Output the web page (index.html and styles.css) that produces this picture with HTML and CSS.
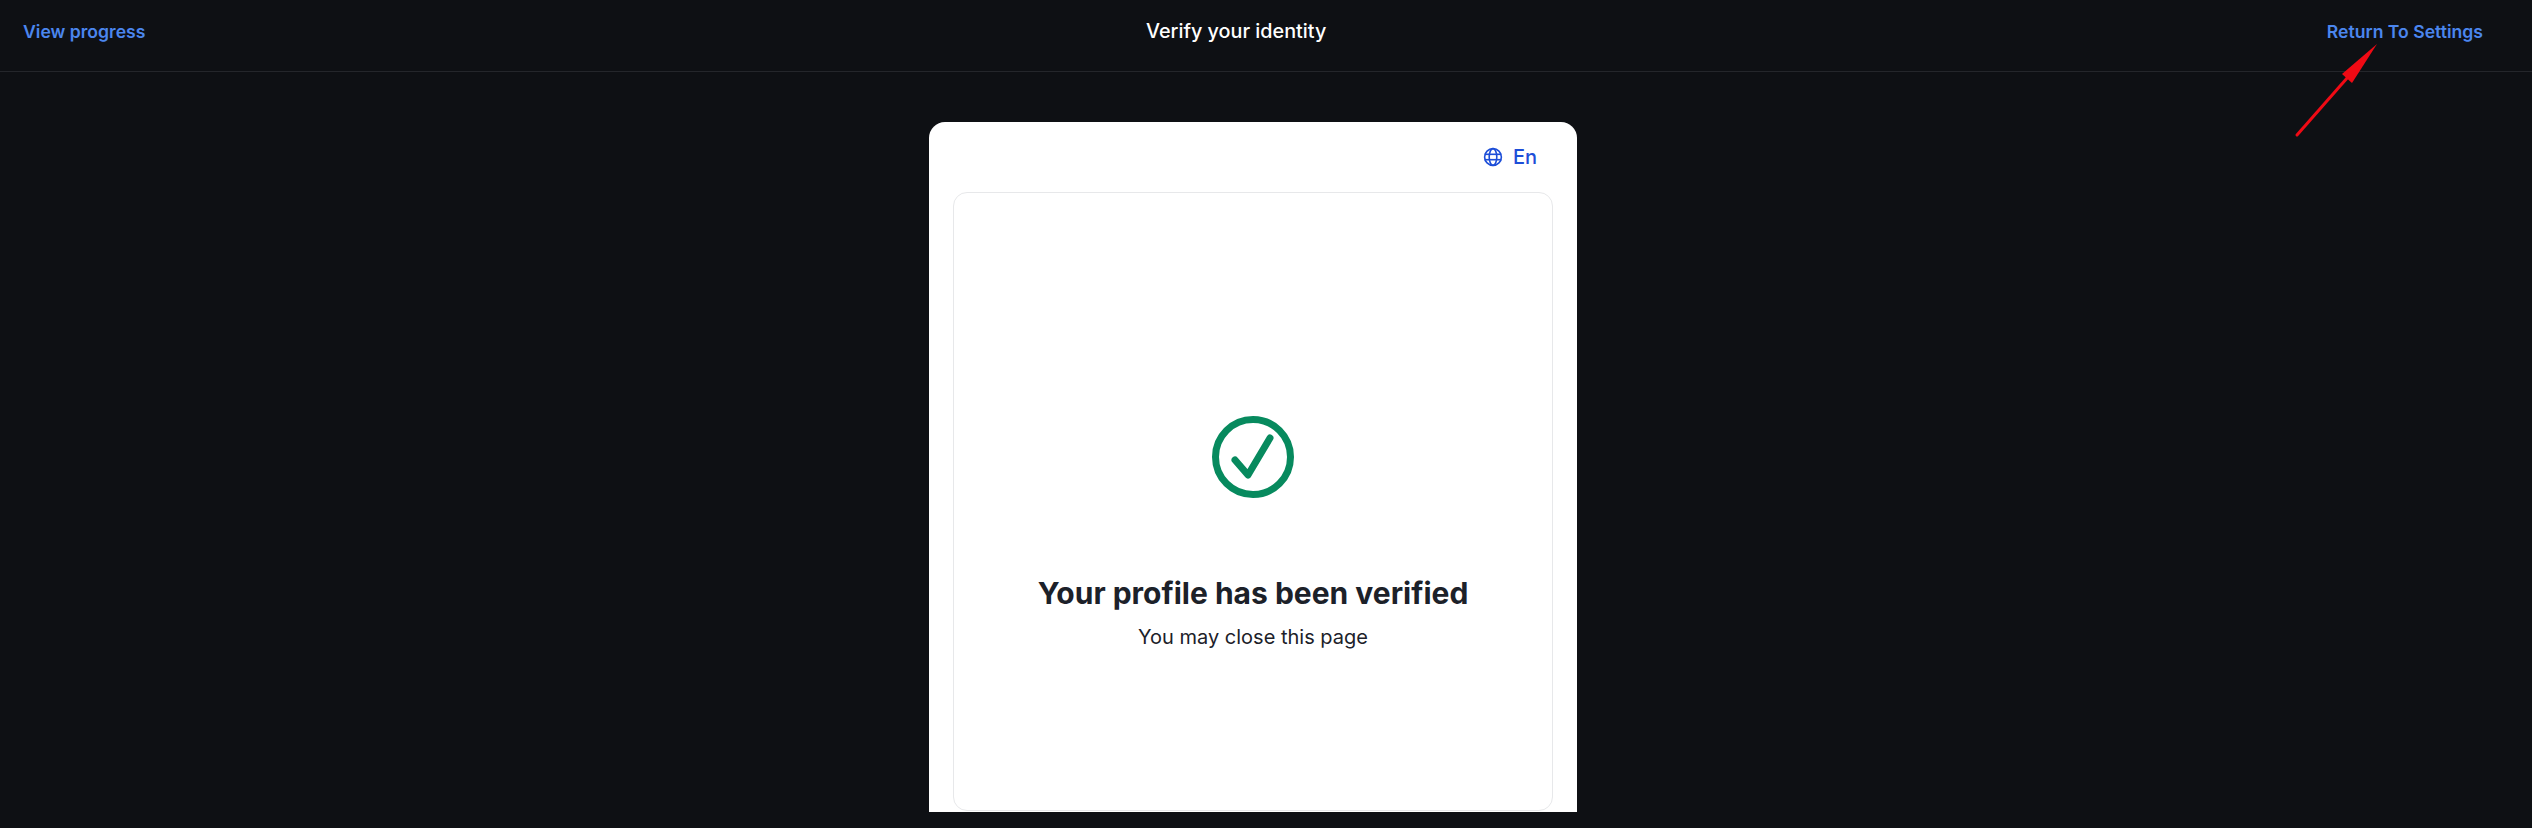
FILE: index.html
```html
<!DOCTYPE html>
<html lang="en">
<head>
  <meta charset="UTF-8" />
  <title>Verify your identity</title>
  <link rel="stylesheet" href="styles.css">
</head>
<body>
  <header class="topbar">
    <a href="#" class="topbar-link">View progress</a>
    <div class="topbar-title">Verify your identity</div>
    <a href="#" class="topbar-link">Return To Settings</a>
  </header>
  <!-- annotation drawn over the screenshot -->
  <svg class="arrow" width="100" height="110" viewBox="0 0 100 110">
    <line x1="7" y1="105" x2="58" y2="47" stroke="#f00a14" stroke-width="3" stroke-linecap="round" />
    <polygon points="87,14 52,44 62,53" fill="#f00a14" />
  </svg>
  <main class="page">
    <div class="card">
      <div class="lang">
        <svg width="20" height="20" viewBox="0 0 20 20" fill="none" stroke="#1d4ed8" stroke-width="1.6">
          <circle cx="10" cy="10" r="8.4" />
          <ellipse cx="10" cy="10" rx="3.8" ry="8.4" />
          <line x1="1.6" y1="7.3" x2="18.4" y2="7.3" />
          <line x1="1.6" y1="12.7" x2="18.4" y2="12.7" />
        </svg>
        <span>En</span>
      </div>
      <div class="result">
        <svg class="result-icon" width="84" height="84" viewBox="0 0 84 84" fill="none" stroke="#078a5e" stroke-width="7" stroke-linecap="round" stroke-linejoin="round">
          <circle cx="42" cy="42" r="37.5" />
          <polyline points="24,45 37,60 59,23" />
        </svg>
        <h1 class="result-title">Your profile has been verified</h1>
        <p class="result-text">You may close this page</p>
      </div>
    </div>
  </main>
</body>
</html>
```
FILE: styles.css
```css
* {
  box-sizing: border-box;
  margin: 0;
  padding: 0;
  font-family: 'Inter', sans-serif;
}
body {
  background-color: #0e1014;
  color: #1c2129;
  height: 828px;
  overflow: hidden;
  position: relative;
}
.topbar {
  display: flex;
  align-items: center;
  justify-content: space-between;
  height: 72px;
  padding: 0 49px 8px 23px;
  border-bottom: 1px solid #24262b;
}
.topbar-link {
  color: #4b86ee;
  font-size: 17.6px;
  font-weight: 600;
  text-decoration: none;
}
.topbar-title {
  color: #fff;
  font-size: 19.8px;
  font-weight: 500;
  margin-bottom: 2px;
}
.arrow {
  position: absolute;
  top: 30px;
  left: 2290px;
}
.page {
  display: flex;
  justify-content: center;
  padding: 50px 26px 0 0;
}
.card {
  background: #fff;
  width: 648px;
  height: 690px;
  border-radius: 16px 16px 0 0;
  padding: 0 24px 1px;
  display: flex;
  flex-direction: column;
}
.lang {
  height: 70px;
  display: flex;
  align-items: center;
  justify-content: flex-end;
  gap: 10px;
  padding: 0 16px 0 0;
  color: #1d4ed8;
  font-size: 20px;
  font-weight: 500;
}
.result {
  flex: 1;
  border: 1.5px solid #e7e8ea;
  border-radius: 14px;
  display: flex;
  flex-direction: column;
  align-items: center;
  padding-top: 222px;
}
.result-icon {
  margin-bottom: 74px;
}
.result-title {
  font-size: 30px;
  font-weight: 700;
  line-height: 40px;
  margin-bottom: 8px;
}
.result-text {
  font-size: 20px;
  line-height: 32px;
}
```
